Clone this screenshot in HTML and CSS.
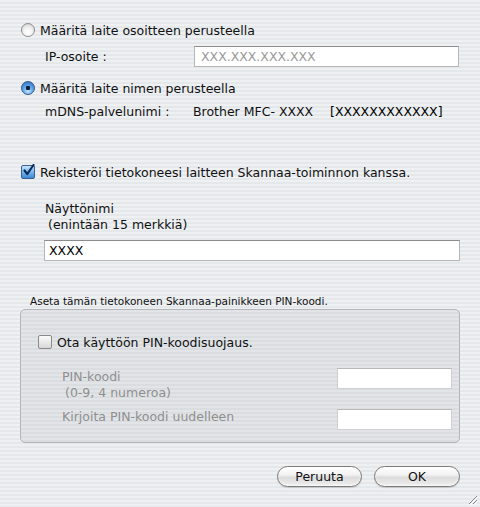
FILE: index.html
```html
<!DOCTYPE html>
<html lang="fi">
<head>
    <meta charset="UTF-8">
    <title>Skannaa-asetukset</title>
    <link rel="stylesheet" href="styles.css">
</head>
<body>
    <div class="dialog">
        <div class="option row-radio1">
            <span class="radio"></span>
            <span class="label">Määritä laite osoitteen perusteella</span>
        </div>
        <div class="field row-ip">
            <span class="field-label">IP-osoite :</span>
            <div class="textbox ip-box"><span class="placeholder">XXX.XXX.XXX.XXX</span></div>
        </div>

        <div class="option row-radio2">
            <span class="radio checked"></span>
            <span class="label">Määritä laite nimen perusteella</span>
        </div>
        <div class="field row-mdns">
            <span class="field-label mdns-label">mDNS-palvelunimi :</span>
            <span class="mdns-name">Brother MFC- XXXX</span>
            <span class="mdns-id">[XXXXXXXXXXXX]</span>
        </div>

        <div class="option row-register">
            <span class="checkbox checked">
                <svg width="13" height="13" viewBox="0 0 13 13"><path d="M2.5 6.5 L5.3 10 L11.5 1" fill="none" stroke="#0b2a5a" stroke-width="2.2" stroke-linecap="round" stroke-linejoin="round"/></svg>
            </span>
            <span class="label">Rekisteröi tietokoneesi laitteen Skannaa-toiminnon kanssa.</span>
        </div>

        <div class="name-label">
            Näyttönimi<br>
            <span class="hint">(enintään 15 merkkiä)</span>
        </div>
        <div class="textbox name-box">XXXX</div>

        <div class="group-title">Aseta tämän tietokoneen Skannaa-painikkeen PIN-koodi.</div>
        <div class="group">
            <div class="option row-pin">
                <span class="checkbox"></span>
                <span class="label">Ota käyttöön PIN-koodisuojaus.</span>
            </div>
            <div class="pin-row first">
                <div class="pin-label">PIN-koodi<br><span class="hint">(0-9, 4 numeroa)</span></div>
                <div class="textbox pin-box"></div>
            </div>
            <div class="pin-row second">
                <div class="pin-label">Kirjoita PIN-koodi uudelleen</div>
                <div class="textbox pin-box"></div>
            </div>
        </div>

        <div class="buttons">
            <button class="btn cancel">Peruuta</button>
            <button class="btn ok">OK</button>
        </div>
    </div>

    <svg class="grip" width="12" height="12" viewBox="0 0 12 12">
        <path d="M11 3 L3 11 M11 7 L7 11" stroke="#8a8a8a" stroke-width="1"/>
        <path d="M12 4 L4 12 M12 8 L8 12" stroke="#ffffff" stroke-width="1"/>
    </svg>
</body>
</html>
```

FILE: styles.css
```css
html, body {
    margin: 0;
    height: 100%;
}

body {
    font-family: "DejaVu Sans", Verdana, sans-serif;
    font-size: 12.5px;
    color: #111;
    background: repeating-linear-gradient(to bottom, #eef0f2 0, #eef0f2 2px, #e5e8eb 2px, #e5e8eb 4px);
    position: relative;
    overflow: hidden;
}

.dialog {
    padding: 23px 20px 0 21px;
}

.option {
    display: flex;
    align-items: center;
    height: 14px;
}

.option .label {
    margin-left: 5px;
    white-space: nowrap;
}

.radio {
    width: 12px;
    height: 12px;
    border-radius: 50%;
    border: 1px solid #8d8d8d;
    background: radial-gradient(circle at 50% 70%, #ffffff 0, #f4f4f4 40%, #c9c9c9 100%);
    flex: none;
}

.radio.checked {
    border-color: #3a5a8a;
    background: radial-gradient(circle at 50% 50%, #0d1f3a 0, #0d1f3a 2px, transparent 2.5px),
                radial-gradient(circle at 50% 75%, #bfe6ff 0, #5fa7e8 45%, #2a66b8 100%);
}

.checkbox {
    width: 12px;
    height: 12px;
    border: 1px solid #8a8a8a;
    border-radius: 2px;
    background: linear-gradient(to bottom, #fafafa, #d8d8d8);
    flex: none;
    position: relative;
}

.checkbox.checked {
    border-color: #3b5f93;
    background: linear-gradient(to bottom, #c8e6fb, #6fb0ea 55%, #3f86d6);
}

.checkbox svg {
    position: absolute;
    left: 0;
    top: -2px;
}

.field {
    display: flex;
    align-items: center;
    padding-left: 24px;
}

.field-label {
    width: 149px;
    flex: none;
}

.textbox {
    box-sizing: border-box;
    height: 21px;
    background: #fff;
    border: 1px solid #b7b7b7;
    border-top-color: #8c8c8c;
    padding: 2px 6px;
    line-height: 15px;
}

.row-ip {
    margin-top: 9px;
}

.ip-box {
    width: 265px;
}

.placeholder {
    color: #9a9a9a;
}

.row-radio2 {
    margin-top: 14px;
}

.row-mdns {
    margin-top: 8px;
    height: 16px;
}

.mdns-label {
    width: 148px;
}

.mdns-name {
    width: 137px;
    flex: none;
}

.mdns-id {
    color: #000;
}

.row-register {
    margin-top: 46px;
}

.name-label {
    margin-top: 22px;
    padding-left: 24px;
    line-height: 16px;
}

.hint {
    padding-left: 3px;
}

.name-box {
    margin: 7px 0 0 23px;
    width: 416px;
    color: #000;
    padding-left: 4px;
}

.group-title {
    margin-top: 33px;
    padding-left: 9px;
    font-size: 10.5px;
    line-height: 14px;
}

.group {
    margin: 1px 0 0 -1px;
    width: 440px;
    height: 134px;
    box-sizing: border-box;
    border: 1px solid #b3b5b8;
    border-radius: 5px;
    background: repeating-linear-gradient(to bottom, #e2e4e7 0, #e2e4e7 2px, #dadde0 2px, #dadde0 4px);
    padding: 25px 7px 0 17px;
}

.pin-row {
    display: flex;
    justify-content: space-between;
    color: #8f8f8f;
    line-height: 16px;
}

.pin-row.first {
    margin-top: 19px;
}

.pin-row.second {
    margin-top: 8px;
}

.pin-label {
    padding-left: 24px;
}

.pin-row.first .pin-label {
    margin-top: 1px;
}

.pin-box {
    width: 115px;
    border-color: #d0d0d0;
    border-top-color: #b8b8b8;
}

.buttons {
    display: flex;
    justify-content: flex-end;
    gap: 12px;
    margin-top: 23px;
    width: 439px;
}

.btn {
    font-family: "DejaVu Sans", Verdana, sans-serif;
    font-size: 12.5px;
    color: #111;
    height: 21px;
    border: 1px solid #7a7a7a;
    border-radius: 11px;
    background: linear-gradient(to bottom, #ffffff 0, #f2f2f2 40%, #dcdcdc 55%, #eeeeee 100%);
    box-shadow: inset 0 -1px 2px rgba(255, 255, 255, 0.8), 0 1px 1px rgba(0, 0, 0, 0.15);
    padding: 0;
}

.cancel {
    width: 85px;
}

.ok {
    width: 86px;
}

.grip {
    position: absolute;
    right: 2px;
    bottom: 2px;
}
```
